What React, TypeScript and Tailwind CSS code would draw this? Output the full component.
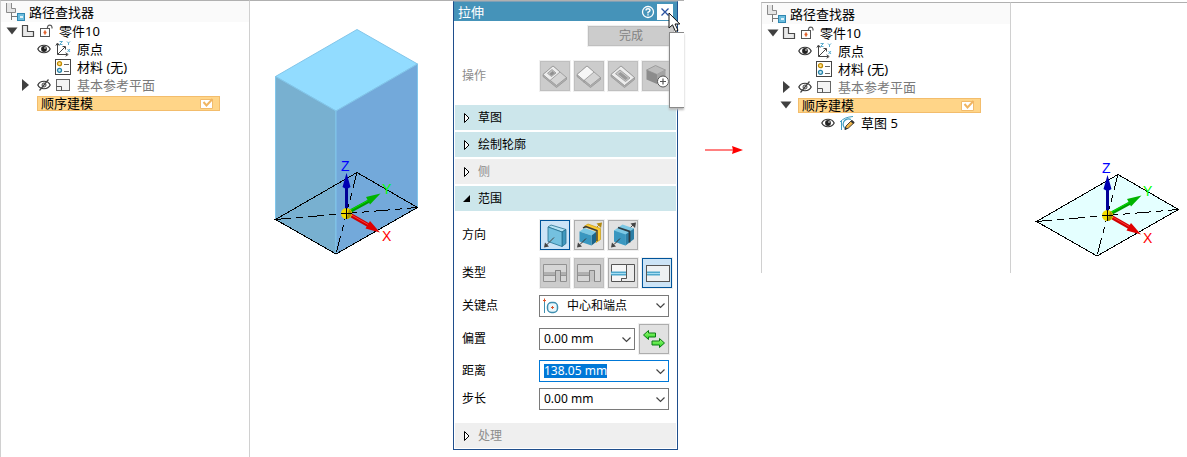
import { useEffect, useRef, useState } from 'react';
import type { ReactNode } from 'react';
import clsx from 'clsx';

/* ---------- tree icons ---------- */

const PathFinderIcon = () => (
  <svg width="20" height="20" viewBox="0 0 20 20" className="shrink-0">
    <path d="M1.5 1V10.5H10.5V6.5H6.5V1" fill="#e4e4e4" stroke="#8a8a8a" />
    <path d="M6.5 10.5V18M6.5 14.5H12" stroke="#777" fill="none" />
    <rect x="12.5" y="11.5" width="7" height="7" fill="#6bbcdd" stroke="#2f86b0" />
    <rect x="15" y="14" width="3" height="2" fill="#dff2fa" />
  </svg>
);

const PartIcon = () => (
  <svg width="14" height="14" viewBox="0 0 14 14" className="shrink-0">
    <path d="M1.5 1.5H6.5V7.5H12.5V12.5H1.5Z" fill="#e9e9e9" stroke="#4a4a4a" strokeWidth="1.2" />
  </svg>
);

const LockIcon = () => (
  <svg width="16" height="16" viewBox="0 0 16 16" className="shrink-0">
    <rect x="1.5" y="5.5" width="9" height="8" fill="#fff" stroke="#555" />
    <path d="M8.5 5.5V4A2.3 2.3 0 0 1 13 4V5.500" fill="none" stroke="#555" strokeWidth="1.2" />
    <path d="M6 7.500v4M4.500 9.500h3" stroke="#e2602a" strokeWidth="1.6" />
  </svg>
);

const EyeIcon = ({ off = false }: { off?: boolean }) => (
  <svg width="14" height="12" viewBox="0 0 14 12" className="shrink-0">
    <path d="M.8 6C3.2 1 10.8 1 13.2 6C10.8 11 3.2 11 .8 6Z" fill="#fff" stroke="#333" strokeWidth="1.2" />
    {off ? (
      <>
        <circle cx="7" cy="6" r="2" fill="none" stroke="#444" />
        <path d="M2.5 11.5L11.5 .5" stroke="#444" strokeWidth="1.2" />
      </>
    ) : (
      <>
        <circle cx="7" cy="6" r="2.9" fill="#222" />
        <circle cx="8" cy="5" r=".8" fill="#fff" />
      </>
    )}
  </svg>
);

const OriginIcon = () => (
  <svg width="16" height="16" viewBox="0 0 16 16" className="shrink-0">
    <path d="M2.5 3V13.5H12M2.5 13.5L10 6" fill="none" stroke="#444" />
    <path d="M.8 4.6L2.5 2L4.2 4.6M10.6 11.8L13.2 13.5L10.6 15.2M7.500 5.500H10.500V8.500" fill="none" stroke="#444" />
    <path d="M4.5 .5H7.5L4.5 3.5H7.5M12 .5L13.5 2L15 .5M13.5 2V4M12.5 8L15 11M15 8L12.5 11" fill="none" stroke="#4aa3c7" strokeWidth=".9" />
  </svg>
);

const MaterialIcon = () => (
  <svg width="16" height="16" viewBox="0 0 16 16" className="shrink-0">
    <rect x=".5" y=".5" width="15" height="15" fill="#fff" stroke="#444" />
    <circle cx="4.5" cy="4.7" r="2" fill="#ffe08a" stroke="#c08a00" strokeWidth="1.3" />
    <circle cx="4.5" cy="11.3" r="2" fill="#c9ebf7" stroke="#2782a8" strokeWidth="1.3" />
    <path d="M9 5.5H14M9 12.5H14" stroke="#666" />
  </svg>
);

const PlaneIcon = () => (
  <svg width="16" height="14" viewBox="0 0 16 14" className="shrink-0">
    <rect x="1.5" y="1.5" width="13" height="11" fill="#f4f4f4" stroke="#666" />
    <path d="M1.5 8.5H6.5V12.5" fill="none" stroke="#555" />
  </svg>
);

const SketchIcon = () => (
  <svg width="16" height="16" viewBox="0 0 16 16" className="shrink-0">
    <path d="M2.5 15V5.5M1 7C4 3.5 8 2 14 1.5" fill="none" stroke="#3f9dc0" />
    <path d="M7 14A5 5 0 0 1 12 4.500" fill="none" stroke="#3f9dc0" strokeWidth="1.200" />
    <path d="M6 14.5L7 11L12.500 5.500L15.2 7.7L9.2 13.2Z" fill="#f0b648" stroke="#333" strokeWidth=".9" />
    <path d="M5.6 14.8L6.5 12L8.4 13.8ZM11.500 6.500L13 5L15.500 7.200L14 8.800Z" fill="#333" />
  </svg>
);

/* ---------- path finder tree ---------- */

function Toggle({ open, label, onClick }: { open: boolean; label: string; onClick?: () => void }) {
  return (
    <button type="button" aria-label={label} aria-expanded={open} onClick={onClick} className="size-3 shrink-0">
      <svg width="12" height="12" viewBox="0 0 12 12">
        <path d={open ? 'M.5 2.5H11.5L6 9.5Z' : 'M3 0V12L10 6Z'} fill="#404040" />
      </svg>
    </button>
  );
}

function PathFinder({ sketch }: { sketch?: string }) {
  const [checked, setChecked] = useState(true);
  const [open, setOpen] = useState(true);

  return (
    <aside className="border-x border-t border-x-[#d0d0d0] border-t-[#b0b0b0] bg-white text-[13px] leading-[18px]">
      <h2 className="flex h-[21px] items-center gap-1 bg-[#fafafa] pl-1">
        <PathFinderIcon />
        路径查找器
      </h2>
      <ul>
        <li className="flex h-[18px] items-center pl-[5px]">
          <Toggle open label="零件10" />
          <span className="ml-[3px] flex items-center gap-1">
            <PartIcon />
            <LockIcon />
            零件10
          </span>
        </li>
        <li className="flex h-[18px] items-center pl-9">
          <EyeIcon />
          <span className="ml-1 flex items-center gap-[6px]">
            <OriginIcon />
            原点
          </span>
        </li>
        <li className="flex h-[18px] items-center gap-[6px] pl-[54px]">
          <MaterialIcon />
          材料 (无)
        </li>
        <li className="flex h-[18px] items-center pl-[18px] text-[#7a7a7a]">
          <Toggle open={false} label="基本参考平面" />
          <span className="ml-[6px] flex">
            <EyeIcon off />
          </span>
          <span className="ml-1 flex items-center gap-[6px]">
            <PlaneIcon />
            基本参考平面
          </span>
        </li>
        <li className="flex h-[18px] items-center gap-[6px] pl-[18px]">
          {sketch ? <Toggle open={open} label="顺序建模" onClick={() => setOpen(!open)} /> : <span className="w-3" />}
          <label className="flex h-[15px] w-[183px] items-center justify-between border border-[#f3bd6c] bg-[#ffd588] pl-[3px] pr-[5px]">
            顺序建模
            <span className="relative size-[14px]">
              <input
                type="checkbox"
                checked={checked}
                onChange={() => setChecked(!checked)}
                className="block size-[14px] appearance-none"
              />
              <svg viewBox="0 0 14 14" className="pointer-events-none absolute inset-0">
                <path d="M.5 3.5H12.5V12.5H.5Z" fill="#fff" stroke="#f1bb6c" />
                {checked && <path d="M3.5 6L6.5 9.5L12.5 3" fill="none" stroke="#f0b562" strokeWidth="2" />}
              </svg>
            </span>
          </label>
        </li>
        {sketch && open && (
          <li className="flex h-[18px] items-center pl-[59px]">
            <EyeIcon />
            <span className="ml-1 flex items-center gap-[6px]">
              <SketchIcon />
              {sketch}
            </span>
          </li>
        )}
      </ul>
    </aside>
  );
}

/* ---------- 3D view ---------- */

function View({ solid = false }: { solid?: boolean }) {
  return (
    <svg viewBox="0 1 176 264" className="h-[264px] w-[176px]">
      {solid ? (
        <g strokeWidth="1" stroke="#82c6ea">
          <path d="M25.5 76.5L107 29.5L167.5 64L86 111Z" fill="#92dcff" />
          <path d="M25.5 76.5L86 111V254L25.5 219.5Z" fill="#78b0d0" />
          <path d="M86 111L167.5 64V207.5L86 254Z" fill="#73a9da" />
        </g>
      ) : (
        <path d="M25.5 219.5L107 172.5L167.5 207.5L86 254Z" fill="#e4ffff" />
      )}
      <g fill="none" stroke="#000" shapeRendering="crispEdges">
        <path d="M25.5 219.5L107 172.5L167.5 207.5L86 254Z" />
        <path d="M25.5 219.5L167.5 207.5" strokeDasharray="16 5 7 5" />
        <path d="M107 172.5L86 254" strokeDasharray="16 5 7 5" />
      </g>
      <path d="M96.5 212V187" stroke="#000096" strokeWidth="3" />
      <path d="M96.5 173L100.5 187Q96.5 190 92.5 187Z" fill="#0000b4" />
      <path d="M97 213L119 201" stroke="#009c00" strokeWidth="3.500" />
      <path d="M97 212L119 200" stroke="#00e800" />
      <path d="M130.500 193.500L116 197L120 204.500Z" fill="#00b400" />
      <path d="M97 213L119 225.5" stroke="#d00000" strokeWidth="4" />
      <path d="M98 213L119 225" stroke="#ff3a3a" />
      <path d="M130 232.500L120 221L115.500 228.500Z" fill="#e00000" />
      <circle cx="96.500" cy="213.500" r="5.500" fill="#f2dc00" />
      <path d="M99 209A5.500 5.500 0 0 1 96.500 219Z" fill="#a89600" />
      <path d="M91 213.500H102M96.500 208V219" stroke="#000" />
      <g className="font-['Liberation_Sans',sans-serif] text-[14px]">
        <text x="91" y="171" fill="#0000ff">Z</text>
        <text x="132" y="194" fill="#00ff00">Y</text>
        <text x="132" y="241" fill="#ff0000">X</text>
      </g>
    </svg>
  );
}

/* ---------- extrude dialog ---------- */

type ToolState = 'normal' | 'disabled' | 'active';

function Tool({ label, state = 'normal', children }: { label: string; state?: ToolState; children: ReactNode }) {
  return (
    <button
      type="button"
      aria-label={label}
      disabled={state === 'disabled'}
      className={clsx(
        'size-[30px] shrink-0 border ring-1 ring-[#f0f0f0]',
        state === 'normal' && 'border-[#adadad] bg-[#e1e1e1]',
        state === 'disabled' && 'border-[#bfbfbf] bg-[#cccccc]',
        state === 'active' && 'border-[#00549a] bg-[#cce4f7]'
      )}
    >
      <svg width="28" height="28" viewBox="0 0 28 28">
        {children}
      </svg>
    </button>
  );
}

function Slab({ children }: { children?: ReactNode }) {
  return (
    <g stroke="#949494" strokeWidth=".8" strokeLinejoin="round">
      <path d="M2 12.500V14.500L15.500 25.500L25.500 17.500V15.500Z" fill="#b0b0b0" />
      <path d="M2 12.500L12 4L25.500 15.500L15.500 23.500Z" fill="#d4d4d4" />
      {children}
    </g>
  );
}

function Section({ title, open = false, muted = false }: { title: string; open?: boolean; muted?: boolean }) {
  return (
    <button
      type="button"
      aria-expanded={open}
      className={clsx(
        'mx-px flex h-[25px] items-center gap-[6px] pl-[6px] text-left',
        muted ? 'bg-[#efefef] text-[#8c8c8c]' : 'bg-[#cce6eb] text-black'
      )}
    >
      <svg width="11" height="12" viewBox="0 0 11 12">
        {open ? (
          <path d="M9 2V9H2Z" fill="#000" />
        ) : (
          <path d="M3.500 1.500V10.500L8 6Z" fill="#fff" stroke="#000" />
        )}
      </svg>
      {title}
    </button>
  );
}

const Chevron = () => (
  <svg width="9" height="6" viewBox="0 0 9 6">
    <path d="M.5 .5L4.500 4.500L8.500 .5" fill="none" stroke="#444" strokeWidth="1.200" />
  </svg>
);

function ValueBox({ id, value, focused = false }: { id: string; value: string; focused?: boolean }) {
  const ref = useRef<HTMLInputElement>(null);

  useEffect(() => {
    if (focused) {
      ref.current?.focus();
      ref.current?.select();
    }
  }, [focused]);

  return (
    <div className={clsx('flex h-[22px] min-w-0 flex-1 items-center border pl-1', focused ? 'border-[#0078d7]' : 'border-[#7a7a7a]')}>
      <input
        ref={ref}
        id={id}
        type="text"
        defaultValue={value}
        className="h-[14px] w-0 flex-1 bg-transparent leading-[14px] outline-none selection:bg-[#0078d7] selection:text-white"
      />
      <button type="button" aria-label="展开" className="flex h-full w-4 items-center justify-center pt-[2px]">
        <Chevron />
      </button>
    </div>
  );
}

const rowLabel = 'w-[77px] shrink-0';

function ExtrudeDialog() {
  return (
    <section className="relative flex flex-col self-start border border-t-[#7f9fb5] border-[#1f4e8c] bg-white pb-px text-[12px] leading-4 text-black">
      <header className="flex h-[19px] items-center bg-[#4593b9] pl-1 pr-1 text-[13px] text-white">
        <h1 className="flex-1">拉伸</h1>
        <button type="button" aria-label="帮助" className="mr-[2px]">
          <svg width="14" height="14" viewBox="0 0 14 14">
            <circle cx="7" cy="7" r="5.500" fill="none" stroke="#fff" strokeWidth="1.3" />
            <path d="M5 5.500Q5 3.800 7 3.800T9 5.500Q9 6.300 7 7.300V8.400M7 9.300V10.600" fill="none" stroke="#fff" strokeWidth="1.4" />
          </svg>
        </button>
        <button type="button" aria-label="关闭" className="flex h-4 w-4 items-center justify-center bg-white">
          <svg width="10" height="10" viewBox="0 0 10 10">
            <path d="M1.500 1.500L8.500 8.500M8.500 1.500L1.500 8.500" stroke="#2a52a0" strokeWidth="1.3" />
          </svg>
        </button>
      </header>

      <div className="flex justify-end pr-[3px] pt-[5px]">
        <button type="button" disabled className="h-5 w-[86px] border border-[#bfbfbf] bg-[#cccccc] text-[#838383] ring-1 ring-[#f0f0f0]">
          完成
        </button>
      </div>

      <div className="flex items-center gap-1 pb-[14px] pl-2 pt-[15px]">
        <span className="mr-[-3px] w-[77px] shrink-0 text-[#8c8c8c]">操作</span>
        <Tool label="添加" state="disabled">
          <Slab>
            <path d="M2 12.500L12 4L19 10L9 18.500Z" fill="#ececec" />
            <path d="M11 7.500L15 11L10.500 14.500L6.500 11.300Z" fill="#c4c4c4" />
            <path d="M11.500 9.500L13.500 11.200L10.500 13.200L8.800 11.800Z" fill="#909090" />
          </Slab>
        </Tool>
        <Tool label="切割" state="disabled">
          <Slab>
            <path d="M2 12.500L12 4L19 10L9 18.500Z" fill="#f6f6f6" />
            <path d="M9 18.500V20.500" />
          </Slab>
        </Tool>
        <Tool label="区域" state="disabled">
          <Slab>
            <path d="M2 12.500L12 4L25.500 15.500L15.500 23.500Z" fill="#ececec" />
            <path d="M11 8L21 16L16.500 19.500L6.500 11.700Z" fill="#c8c8c8" />
            <path d="M11.500 10.500L18.500 16L16.500 17.700L9.500 12Z" fill="#9a9a9a" />
          </Slab>
        </Tool>
        <Tool label="新建体" state="disabled">
          <path d="M3.500 8L12.500 3.500L22.500 8L14 12.500Z" fill="#bcbcbc" stroke="#8c8c8c" strokeWidth=".7" />
          <path d="M3.500 8L14 12.500V22L3.500 17.500Z" fill="#8c8c8c" />
          <path d="M14 12.500L22.500 8V17L14 22Z" fill="#a4a4a4" />
          <circle cx="20" cy="19.500" r="5.500" fill="#fff" stroke="#555" />
          <path d="M20 16.500V22.500M17 19.500H23" stroke="#555" strokeWidth="1.2" />
        </Tool>
      </div>

      <div className="flex flex-col gap-[2px]">
        <Section title="草图" />
        <Section title="绘制轮廓" />
        <Section title="侧" muted />
        <Section title="范围" open />
      </div>

      <div className="flex flex-col gap-[6px] pb-[13px] pl-2 pr-2 pt-2">
        <div className="flex h-8 items-center gap-1">
          <span className="mr-[-3px] w-[77px] shrink-0">方向</span>
          <Tool label="单向" state="active">
            <path d="M7 6L10 4L25 8.500L21 11Z" fill="#b4e2f4" stroke="#24708f" strokeWidth=".8" />
            <path d="M21 11L25 8.500V22.500L21 25.500Z" fill="#3f97bd" stroke="#24708f" strokeWidth=".8" />
            <path d="M7 6L21 11V25.500L7 20.500Z" fill="#74c1e0" stroke="#24708f" strokeWidth=".8" />
            <path d="M13 16.500L5 24.500" stroke="#444" />
            <path d="M3 26.500L4 21.500L8 25.500Z" fill="#444" />
          </Tool>
          <Tool label="双向">
            <path d="M21 7L25.500 2.500" stroke="#b38a10" />
            <path d="M27 1.500L21.500 2.500L26 7Z" fill="#b38a10" />
            <path d="M9 5.500L13 3L25.500 7.500V18.500L21 21.500V10Z" fill="#ffcb2e" stroke="#c39a14" strokeWidth=".7" />
            <path d="M8 7L11 5.500L22 9.500V20" fill="none" stroke="#3a3a3a" strokeWidth="1.400" />
            <path d="M4.500 10.500L9.500 7L21 11L16.500 14.500Z" fill="#7cc8e4" />
            <path d="M16.500 14.500L21 11V21L16.500 24.500Z" fill="#1b658a" />
            <path d="M4.500 10.500L16.500 14.500V24.500L4.500 20.500Z" fill="#3a97c0" />
            <path d="M11 17.500L5 23.500" stroke="#333" />
            <path d="M2 26.500L3 21.500L7 25.500Z" fill="#444" />
          </Tool>
          <Tool label="对称">
            <path d="M20 8L25 3" stroke="#444" />
            <path d="M27 1.500L21.500 2.500L26 7Z" fill="#444" />
            <path d="M5 9.500L13.500 3.500L25 7.500V18L16.500 24.500L5 20.500Z" fill="#7cc8e4" />
            <path d="M16.500 13.500L25 7.500V18L16.500 24.500Z" fill="#2c7ea5" />
            <path d="M5 9.500L16.500 13.500V24.500L5 20.500Z" fill="#3a97c0" />
            <path d="M9 6.500L20.500 10.500V21.500" fill="none" stroke="#2e3a40" strokeWidth="1.800" />
            <path d="M11 17.500L5 23.500" stroke="#333" />
            <path d="M2 26.500L3 21.500L7 25.500Z" fill="#444" />
          </Tool>
        </div>

        <div className="flex h-8 items-center gap-1">
          <span className="mr-[-3px] w-[77px] shrink-0">类型</span>
          <Tool label="全部穿透" state="disabled">
            <path d="M2.500 5.500H25.500V22.500H19.500V11.500H14.500V22.500H2.500Z" fill="#d6d6d6" stroke="#919191" />
            <path d="M3 14.500H14M20 14.500H25" stroke="#b0b0b0" strokeWidth="3" />
            <path d="M3 16.500H14M20 16.500H25" stroke="#949494" />
            <path d="M14.500 22.500V11.500H19.500V22.500" fill="#c4c4c4" stroke="#848484" />
          </Tool>
          <Tool label="穿过下一个" state="disabled">
            <path d="M2.500 5.500H25.500V22.500H19.500V11.500H14.500V22.500H2.500Z" fill="#d6d6d6" stroke="#919191" />
            <path d="M3 14.500H14" stroke="#b0b0b0" strokeWidth="3" />
            <path d="M3 16.500H14" stroke="#949494" />
            <path d="M14.500 22.500V11.500H19.500V22.500" fill="#c4c4c4" stroke="#848484" />
          </Tool>
          <Tool label="起始/终止范围">
            <path d="M2.500 5.500H17.500V19.500H12.500V22.500H2.500Z" fill="#f6f6f6" stroke="#555" />
            <path d="M17.500 5.500H25.500V22.500H12.500V19.500H17.500Z" fill="#ececec" stroke="#555" />
            <path d="M2 14.500H17" stroke="#4fa8cd" strokeWidth="4" />
            <path d="M2 14.500H17" stroke="#a6def2" />
          </Tool>
          <Tool label="有限范围" state="active">
            <rect x="3.500" y="6.500" width="23" height="16" fill="#eef1f3" stroke="#555" />
            <path d="M4 14.500H17" stroke="#4fa8cd" strokeWidth="4" />
            <path d="M4 14.500H17" stroke="#a6def2" />
          </Tool>
        </div>

        <div className="flex items-center">
          <label htmlFor="keypoint" className={rowLabel}>关键点</label>
          <div className="relative min-w-0 flex-1">
            <select id="keypoint" className="block h-[22px] w-full appearance-none border border-[#7a7a7a] bg-white pl-[27px] outline-none">
              <option>中心和端点</option>
            </select>
            <svg width="16" height="16" viewBox="0 0 16 16" className="pointer-events-none absolute left-1 top-[3px]">
              <path d="M1.500 15V2" stroke="#3f8fb0" />
              <path d="M1.500 .5V4M0 2.500H3" stroke="#d9542b" />
              <rect x="4.500" y="4.500" width="10" height="10" rx="4" fill="#e9f7fc" stroke="#3f8fb0" strokeWidth="1.500" />
              <path d="M9.500 8V11M8 9.500H11" stroke="#d9542b" />
            </svg>
            <span className="pointer-events-none absolute right-1 top-2 flex">
              <Chevron />
            </span>
          </div>
        </div>

        <div className="flex h-[31px] items-center gap-1">
          <label htmlFor="offset" className="mr-[-4px] w-[77px] shrink-0">偏置</label>
          <ValueBox id="offset" value="0.00 mm" />
          <Tool label="反向">
            <defs>
              <linearGradient id="swap" x1="0" y1="0" x2="0" y2="1">
                <stop offset="0" stopColor="#a4ff7a" />
                <stop offset="1" stopColor="#22d322" />
              </linearGradient>
            </defs>
            <g fill="url(#swap)" stroke="#0a7a12" strokeLinejoin="round">
              <path d="M3.500 10L8.500 5.500V8H15.500V12H8.500V14.500Z" />
              <path d="M24.500 18L19.500 13.500V16H12V20H19.500V22.500Z" />
            </g>
          </Tool>
        </div>

        <div className="flex items-center">
          <label htmlFor="distance" className={rowLabel}>距离</label>
          <ValueBox id="distance" value="138.05 mm" focused />
        </div>

        <div className="flex items-center">
          <label htmlFor="step" className={rowLabel}>步长</label>
          <ValueBox id="step" value="0.00 mm" />
        </div>
      </div>

      <Section title="处理" muted />

      {/* empty tooltip and mouse pointer next to the close button */}
      <div className="absolute right-[-7px] top-[30px] h-[76px] w-[15px] border-y border-l border-[#8a8a8a] bg-white shadow-[0_2px_2px_#bbbbbb]" />
      <svg width="13" height="21" viewBox="0 0 13 21" className="absolute right-[-4px] top-[10px]">
        <path d="M1 1V16L4.500 12.800L7.500 19.500L10 18.300L7 12H11.800Z" fill="#fff" stroke="#111" />
      </svg>
    </section>
  );
}

export default function App() {
  return (
    <main className="grid min-h-screen grid-cols-[250px_203fr_225px_83fr_250px_176fr] bg-white font-['Noto_Sans','Noto_Sans_CJK_SC',sans-serif] text-black">
      <PathFinder />
      <div className="min-w-0 border-t border-[#b0b0b0]">
        <View solid />
      </div>
      <div className="flex flex-col border-t border-[#b0b0b0] [&>section]:w-full">
        <ExtrudeDialog />
      </div>
      <div className="min-w-0">
        <div className="w-[6px] border-t border-[#b0b0b0]" />
        <div className="flex justify-center pl-2 pt-36">
          <svg width="38" height="10" viewBox="0 0 38 10">
            <path d="M0 5H28" stroke="#ff8080" strokeWidth="2" />
            <path d="M27 1L38 5L27 9L28 5Z" fill="#ff0000" />
          </svg>
        </div>
      </div>
      <div className="grid min-h-[273px] self-start pt-[2px]">
        <PathFinder sketch="草图 5" />
      </div>
      <div className="min-w-0 pt-[2px]">
        <div className="border-t border-[#b0b0b0]">
          <View />
        </div>
      </div>
    </main>
  );
}
